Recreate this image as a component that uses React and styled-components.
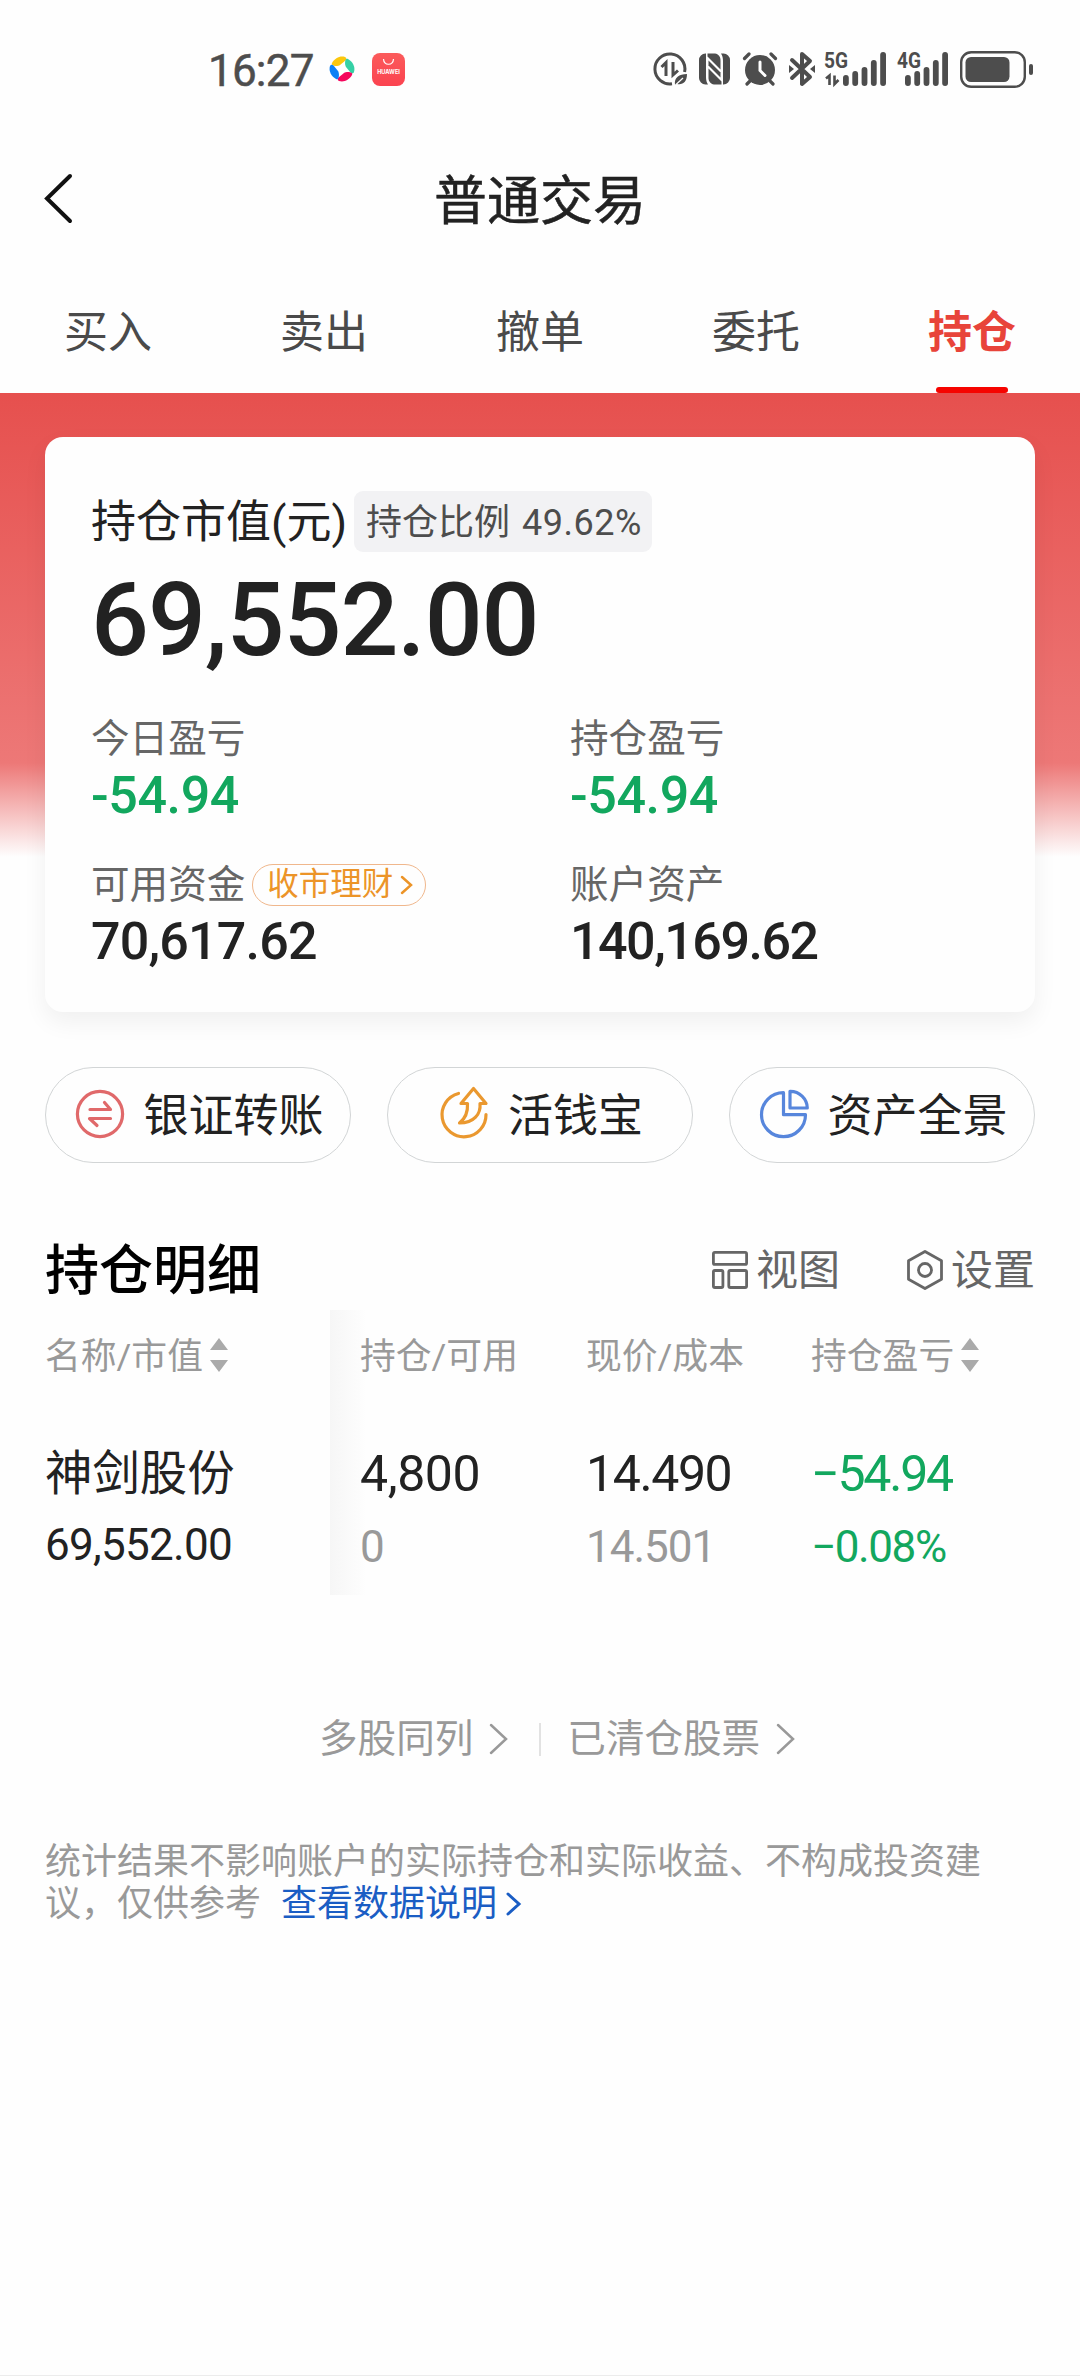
import React from "react";
import styled, { createGlobalStyle } from "styled-components";

const GlobalStyle = createGlobalStyle`
  * { box-sizing: border-box; }
  body {
    margin: 0;
    background: #fefefe;
    font-family: Roboto, "Noto Sans CJK SC", sans-serif;
    color: #222;
  }
  svg { display: block; flex: none; overflow: visible; }
`;

const Screen = styled.main`
  width: 1080px;
  height: 2376px;
  overflow: hidden;
  background: #fefefe;
  border-bottom: 1px solid #ececec;
`;

/* ---------- status bar ---------- */

const StatusBar = styled.div`
  height: 138px;
  padding: 0 47px 0 208px;
  display: flex;
  align-items: center;
  color: #4d4d4d;
`;

const Clock = styled.span`
  width: 117px;
  padding-top: 3px;
  font-size: 44px;
  line-height: 50px;
  font-weight: 400;
  letter-spacing: -0.8px;
  -webkit-text-stroke: 0.5px currentColor;
`;

const AppIcons = styled.div`
  display: flex;
  align-items: center;
  gap: 17px;
  padding-left: 4px;
`;

const SystemIcons = styled.div`
  margin-left: auto;
  display: flex;
  align-items: center;
`;

const Slot = styled.div`
  width: ${(p) => p.$w}px;
  flex: none;
`;

const HuaweiBadge = styled.div`
  width: 33px;
  height: 33px;
  border-radius: 8px;
  background: linear-gradient(#fb5b5b, #fb4350);
  display: flex;
  flex-direction: column;
  align-items: center;
  padding-top: 6px;
  gap: 4px;
  color: #fff;
  font: 700 5.6px/7px Inter, sans-serif;
`;

/* ---------- header and tabs ---------- */

const Header = styled.header`
  height: 124px;
  padding: 0 45px;
  display: grid;
  grid-template-columns: 60px 1fr 60px;
  align-items: center;
  > svg { margin-bottom: 4px; }
`;

const Title = styled.h1`
  margin: 0;
  padding-top: 3px;
  text-align: center;
  font-size: 53px;
  line-height: 60px;
  font-weight: 400;
  -webkit-text-stroke: 0.5px currentColor;
`;

const Tabs = styled.nav`
  height: 131px;
  display: grid;
  grid-template-columns: repeat(5, 1fr);
`;

const Tab = styled.div`
  display: flex;
  flex-direction: column;
  align-items: center;
  justify-content: space-between;
  padding-top: 41px;
  font-size: 44px;
  line-height: 60px;
  font-weight: ${(p) => (p.$active ? 700 : 400)};
  color: ${(p) => (p.$active ? "#e8443a" : "#4a4a4a")};
`;

const Indicator = styled.i`
  width: 72px;
  height: 6px;
  border-radius: 3px;
  background: #f60400;
`;

/* ---------- summary card ---------- */

const Hero = styled.section`
  padding: 44px 45px 0;
  background: linear-gradient(#e6504e 0, #ed7877 370px, #fefefe 464px) no-repeat;
`;

const Card = styled.div`
  height: 575px;
  padding: 54px 46px 0;
  border-radius: 18px;
  background: #fefefe;
  box-shadow: 0 10px 24px rgba(0, 0, 0, 0.06);
`;

const MarketLine = styled.div`
  display: flex;
  align-items: center;
  height: 61px;
`;

const MarketLabel = styled.span`
  width: 263px;
  padding-top: 3px;
  font-size: 45px;
  line-height: 60px;
  white-space: nowrap;
`;

const Chip = styled.span`
  width: 298px;
  height: 61px;
  padding-left: 12px;
  border-radius: 9px;
  background: #f2f2f4;
  color: #4d4d4d;
  font-size: 36px;
  line-height: 65px;
  white-space: nowrap;
`;

const ChipNumber = styled.span`
  margin-left: 12px;
  letter-spacing: 0.5px;
`;

const BigNumber = styled.div`
  padding-top: 17px;
  font-size: 102px;
  line-height: 102px;
  font-weight: 500;
  letter-spacing: -1.05px;
`;

const Stats = styled.div`
  display: grid;
  grid-template-columns: 479px 1fr;
  padding-top: 38px;
  row-gap: 26px;
`;

const StatLabel = styled.div`
  height: 60px;
  display: flex;
  align-items: center;
  gap: 7px;
  font-size: 38.6px;
  line-height: 60px;
  color: #666;
`;

const StatValue = styled.div`
  height: 60px;
  margin-top: -3px;
  margin-bottom: 3px;
  font-size: 52px;
  line-height: 60px;
  font-weight: 500;
  letter-spacing: ${(p) => p.$track || -0.4}px;
  color: ${(p) => (p.$down ? "#12a75e" : "#222")};
`;

const FinancePill = styled.span`
  height: 42px;
  width: 174px;
  padding-left: 14px;
  display: flex;
  align-items: center;
  gap: 7px;
  border: 1px solid #f0b78c;
  border-radius: 21px;
  font-size: 31.5px;
  line-height: 42px;
  color: #ec9428;
`;

/* ---------- shortcuts ---------- */

const Shortcuts = styled.div`
  padding: 55px 45px 0;
  display: grid;
  grid-template-columns: repeat(3, 306px);
  gap: 36px;
`;

const Shortcut = styled.div`
  height: 96px;
  padding-left: 3px;
  display: flex;
  align-items: center;
  justify-content: center;
  gap: 18px;
  border: 1px solid #d2d5d6;
  border-radius: 48px;
  font-size: 45px;
  line-height: 60px;
  > svg { margin-bottom: 2px; }
  span { padding-top: 3px; }
`;

/* ---------- holdings ---------- */

const SectionHead = styled.div`
  height: 66px;
  margin: 75px 45px 6px;
  display: flex;
  align-items: center;
`;

const SectionTitle = styled.h2`
  margin: 0;
  padding-top: 2px;
  flex: 1;
  font-size: 54px;
  line-height: 66px;
  font-weight: 500;
  color: #000;
`;

const Tool = styled.div`
  display: flex;
  align-items: center;
  gap: 8px;
  margin-left: 67px;
  font-size: 42px;
  line-height: 60px;
  color: #666;
  > svg { margin-bottom: 3px; }
`;

const Table = styled.div`
  height: 285px;
  padding-left: 45px;
  display: grid;
  grid-template-columns: 285px 256px 225px 1fr;
`;

const Column = styled.div`
  display: flex;
  flex-direction: column;
  ${(p) =>
    p.$shaded &&
    `padding-left: 30px;
     background: linear-gradient(90deg, #f6f6f6, #fefefe) no-repeat 0 0 / 36px 100%;`}
`;

const HeadCell = styled.div`
  height: 92px;
  margin-bottom: 37px;
  padding-top: 1px;
  display: flex;
  align-items: center;
  gap: 7px;
  font-size: 35.8px;
  line-height: 40px;
  color: #999;
  > svg { margin-bottom: 3px; }
`;

const Primary = styled.div`
  height: 70px;
  font-size: ${(p) => (p.$name ? 47.4 : 50)}px;
  line-height: 70px;
  letter-spacing: ${(p) => p.$track}px;
  color: ${(p) => (p.$down ? "#12a75e" : "#222")};
`;

const Secondary = styled.div`
  height: 70px;
  padding-top: ${(p) => (p.$lead ? 1 : 3)}px;
  font-size: 44px;
  line-height: 70px;
  letter-spacing: ${(p) => (p.$down ? -1.4 : p.$lead ? -0.7 : -1)}px;
  color: ${(p) => (p.$down ? "#12a75e" : p.$lead ? "#222" : "#999")};
`;

/* ---------- footer ---------- */

const Links = styled.div`
  height: 60px;
  margin-top: 114px;
  padding-left: 319px;
  display: flex;
  align-items: center;
  font-size: 38.6px;
  line-height: 60px;
  color: #999;
`;

const LinkItem = styled.div`
  display: flex;
  align-items: center;
  gap: 16px;
`;

const Divider = styled.i`
  width: 2px;
  height: 33px;
  margin: 0 26px 0 31px;
  background: #e2e2e2;
`;

const Notice = styled.div`
  margin: 72px 45px 0;
  font-size: 36px;
  line-height: 42px;
  color: #999;
`;

const NoticeLine = styled.div`
  display: flex;
  align-items: center;
  gap: 20px;
  white-space: nowrap;
`;

const NoticeLink = styled.a`
  display: flex;
  align-items: center;
  gap: 9px;
  color: #1a5dc4;
`;

/* ---------- icons ---------- */

const Chevron = ({ w, h, sw = 2.5, left, color = "currentColor" }) => (
  <svg width={w} height={h} viewBox={`0 0 ${w} ${h}`} fill="none" stroke={color} strokeWidth={sw} strokeLinecap="round">
    <path d={left ? `M${w - 2} 2L2 ${h / 2}L${w - 2} ${h - 2}` : `M2 2L${w - 2} ${h / 2}L2 ${h - 2}`} />
  </svg>
);

const Pinwheel = () => (
  <svg width="26" height="26" viewBox="0 0 26 26">
    <path d="M3 7C6 2 11 -0.500 16 1C18 2 17.500 3.500 16.500 4.500L11 9C9 10.500 1.500 10.500 3 7Z" fill="#fbc70d" />
    <path d="M19 3C24 6 26.500 11 25 16C24 18 22.500 17.500 21.500 16.500L17 11C15.500 9 15.500 1.500 19 3Z" fill="#35d0a5" />
    <path d="M23 19C20 24 15 26.500 10 25C8 24 8.500 22.500 9.500 21.500L15 17C17 15.500 24.500 15.500 23 19Z" fill="#f5075c" />
    <path d="M7 23C2 20 -0.500 15 1 10C2 8 3.500 8.500 4.500 9.500L9 15C10.500 17 10.500 24.500 7 23Z" fill="#0c80f5" />
  </svg>
);

const DataSaver = () => (
  <svg width="34" height="34" viewBox="0 0 34 34" fill="none" stroke="#4d4d4d" strokeWidth="3">
    <path d="M31.600 20A15 15 0 1 0 19 31.800" />
    <path d="M8.500 15L13 10.500V24M20 10V23L25 18.500" strokeWidth="3" />
    <path d="M22 33C21 25 26 22.500 34 22C34 30 30 33 24 32Z" fill="#4d4d4d" stroke="none" />
    <path d="M22.500 33L30 26" stroke="#fefefe" strokeWidth="1.200" />
  </svg>
);

const Nfc = () => (
  <svg width="31" height="32" viewBox="0 0 31 32" fill="#4d4d4d">
    <path d="M7 0.500H6.500A6.500 6.500 0 0 0 0 7V25A6.500 6.500 0 0 0 6.500 31.500H9C7.500 29 7 27 7 24Z" />
    <path d="M24 31.500H24.500A6.500 6.500 0 0 0 31 25V7A6.500 6.500 0 0 0 24.500 0.500H22C23.500 3 24 5 24 8Z" />
    <path d="M8.500 0.500H16C19.500 1 21.500 3.500 21.500 7.500V16.500L8.500 3.500Z" />
    <path d="M22.500 31.500H15C11.500 31 9.500 28.500 9.500 24.500V15.500L22.500 28.500Z" />
    <path d="M9.500 7.500L21.500 19.500V24.500L9.500 12.500Z" />
  </svg>
);

const Alarm = () => (
  <svg width="34" height="34" viewBox="0 0 34 34" fill="none" stroke="#4d4d4d" strokeWidth="3.200" strokeLinecap="round">
    <circle cx="17" cy="18" r="15" fill="#4d4d4d" stroke="none" />
    <path d="M1.500 6.500L6 2M32.500 6.500L28 2M7 29L4 32M27 29L30 32" />
    <path d="M17 10V18.500L22 23.500" stroke="#fefefe" strokeWidth="3" />
  </svg>
);

const Bluetooth = () => (
  <svg width="26" height="34" viewBox="0 0 26 34" fill="none" stroke="#4d4d4d" strokeWidth="4" strokeLinejoin="round" strokeLinecap="round">
    <path d="M3 8L21 25L13 32V2L21 9L3 26" />
    <path d="M0 13L5 17L0 21ZM26 13L21 17L26 21Z" fill="#4d4d4d" stroke="none" />
  </svg>
);

const Signal = ({ label, x, arrows }) => (
  <svg width="62" height="34" viewBox="0 0 62 34" fill="#4d4d4d">
    <text x="-1" y="16" fontSize="22" fontWeight="700" fontFamily="Roboto" textLength="24" lengthAdjust="spacingAndGlyphs">{label}</text>
    {[23, 19, 15, 8, 0].map((y, i) => (
      <rect key={y} x={x + i * 9.300} y={y} width="5.800" height={34 - y} rx="2.900" />
    ))}
    {arrows && <path d="M1 26.500L4.500 23.500V33M9.500 23.500V32L13.500 28" fill="none" stroke="#4d4d4d" strokeWidth="2.600" />}
  </svg>
);

const Battery = () => (
  <svg width="73" height="37" viewBox="0 0 73 37">
    <rect x="1.200" y="1.200" width="63.600" height="34.600" rx="10" fill="none" stroke="#4d4d4d" strokeWidth="2.400" />
    <rect x="5.500" y="6" width="44" height="25" rx="5.500" fill="#4d4d4d" />
    <rect x="69" y="13" width="4" height="11" rx="2" fill="#4d4d4d" />
  </svg>
);

const TransferIcon = () => (
  <svg width="50" height="50" viewBox="0 0 50 50" fill="none" stroke="#e0696a" strokeWidth="3.200" strokeLinecap="round" strokeLinejoin="round">
    <circle cx="25" cy="25" r="22.600" />
    <path d="M15 20.500H35.500L29.500 13.500M35.500 29.500H14.500L22 36.500" />
  </svg>
);

const CashIcon = () => (
  <svg width="50" height="50" viewBox="0 0 50 50" fill="none" stroke="#ea982f" strokeWidth="3.200" strokeLinecap="round" strokeLinejoin="round">
    <path d="M18.500 4.500A22 22 0 1 0 46 25.500" />
    <path d="M33.500 -0.500L46 14.500H40C41 25 34 34 19.500 34C26 29 28 23 27.500 14.500H21Z" />
  </svg>
);

const PieIcon = () => (
  <svg width="50" height="50" viewBox="0 0 50 50" fill="none" stroke="#5786dc" strokeWidth="3.200" strokeLinejoin="round">
    <path d="M24.500 3.700A22 22 0 1 0 46.500 25.700H24.500Z" />
    <path d="M31 2.300V19H48.300A17 17 0 0 0 31 2.300Z" />
  </svg>
);

const ViewIcon = () => (
  <svg width="36" height="38" viewBox="0 0 36 38" fill="none" stroke="#666" strokeWidth="2.800">
    <rect x="1.400" y="1.400" width="33.200" height="12" rx="1.500" />
    <rect x="1.400" y="19.500" width="9.500" height="17" rx="1.500" />
    <rect x="16.800" y="19.500" width="17.800" height="17" rx="1.500" />
  </svg>
);

const SettingIcon = () => (
  <svg width="36" height="40" viewBox="0 0 36 40" fill="none" stroke="#666" strokeWidth="2.800" strokeLinejoin="round">
    <path d="M18 1.500L34.500 10.700V29.300L18 38.500L1.500 29.300V10.700Z" />
    <circle cx="18" cy="20" r="6.500" />
  </svg>
);

const SortIcon = () => (
  <svg width="18" height="34" viewBox="0 0 18 34" fill="#aaa">
    <path d="M9 0L18 12H0ZM9 34L0 22H18Z" />
  </svg>
);

/* ---------- data ---------- */

const TABS = ["买入", "卖出", "撤单", "委托", "持仓"];

const SHORTCUTS = [
  { label: "银证转账", Icon: TransferIcon },
  { label: "活钱宝", Icon: CashIcon },
  { label: "资产全景", Icon: PieIcon },
];

const COLUMNS = [
  { head: "名称/市值", sort: true, top: "神剑股份", bottom: "69,552.00", lead: true, track: 0 },
  { head: "持仓/可用", top: "4,800", bottom: "0", shaded: true, track: -0.4 },
  { head: "现价/成本", top: "14.490", bottom: "14.501", track: -1.4 },
  { head: "持仓盈亏", sort: true, top: "−54.94", bottom: "−0.08%", down: true, track: -2.2 },
];

export default function App() {
  return (
    <Screen>
      <GlobalStyle />
      <StatusBar>
        <Clock>16:27</Clock>
        <AppIcons>
          <Pinwheel />
          <HuaweiBadge>
            <svg width="11" height="6" viewBox="0 0 11 6" fill="none" stroke="#fff" strokeWidth="1.200">
              <path d="M0.500 0C1 7 10 7 10.500 0" />
            </svg>
            HUAWEI
          </HuaweiBadge>
        </AppIcons>
        <SystemIcons>
          <Slot $w={46}><DataSaver /></Slot>
          <Slot $w={44}><Nfc /></Slot>
          <Slot $w={46}><Alarm /></Slot>
          <Slot $w={36}><Bluetooth /></Slot>
          <Slot $w={73}><Signal label="5G" x={18} arrows /></Slot>
          <Slot $w={62}><Signal label="4G" x={7} /></Slot>
          <Battery />
        </SystemIcons>
      </StatusBar>

      <Header>
        <Chevron w={27} h={49} sw={4} left color="#111" />
        <Title>普通交易</Title>
      </Header>

      <Tabs>
        {TABS.map((t, i) => (
          <Tab key={t} $active={i === 4}>
            {t}
            {i === 4 && <Indicator />}
          </Tab>
        ))}
      </Tabs>

      <Hero>
        <Card>
          <MarketLine>
            <MarketLabel>持仓市值(元)</MarketLabel>
            <Chip>
              持仓比例
              <ChipNumber>49.62%</ChipNumber>
            </Chip>
          </MarketLine>
          <BigNumber>69,552.00</BigNumber>
          <Stats>
            <div>
              <StatLabel>今日盈亏</StatLabel>
              <StatValue $down>-54.94</StatValue>
            </div>
            <div>
              <StatLabel>持仓盈亏</StatLabel>
              <StatValue $down>-54.94</StatValue>
            </div>
            <div>
              <StatLabel>
                可用资金
                <FinancePill>
                  收市理财
                  <Chevron w={13} h={20} />
                </FinancePill>
              </StatLabel>
              <StatValue $track={-0.8}>70,617.62</StatValue>
            </div>
            <div>
              <StatLabel>账户资产</StatLabel>
              <StatValue $track={-1.5}>140,169.62</StatValue>
            </div>
          </Stats>
        </Card>
      </Hero>

      <Shortcuts>
        {SHORTCUTS.map(({ label, Icon }) => (
          <Shortcut key={label}>
            <Icon />
            <span>{label}</span>
          </Shortcut>
        ))}
      </Shortcuts>

      <SectionHead>
        <SectionTitle>持仓明细</SectionTitle>
        <Tool>
          <ViewIcon />
          视图
        </Tool>
        <Tool>
          <SettingIcon />
          设置
        </Tool>
      </SectionHead>

      <Table>
        {COLUMNS.map((c) => (
          <Column key={c.head} $shaded={c.shaded}>
            <HeadCell>
              {c.head}
              {c.sort && <SortIcon />}
            </HeadCell>
            <Primary $name={c.lead} $down={c.down} $track={c.track}>{c.top}</Primary>
            <Secondary $lead={c.lead} $down={c.down}>{c.bottom}</Secondary>
          </Column>
        ))}
      </Table>

      <Links>
        <LinkItem>
          多股同列
          <Chevron w={19} h={32} />
        </LinkItem>
        <Divider />
        <LinkItem>
          已清仓股票
          <Chevron w={19} h={32} />
        </LinkItem>
      </Links>

      <Notice>
        <NoticeLine>统计结果不影响账户的实际持仓和实际收益、不构成投资建</NoticeLine>
        <NoticeLine>
          议，仅供参考
          <NoticeLink>
            查看数据说明
            <Chevron w={15} h={24} sw={3} />
          </NoticeLink>
        </NoticeLine>
      </Notice>
    </Screen>
  );
}
